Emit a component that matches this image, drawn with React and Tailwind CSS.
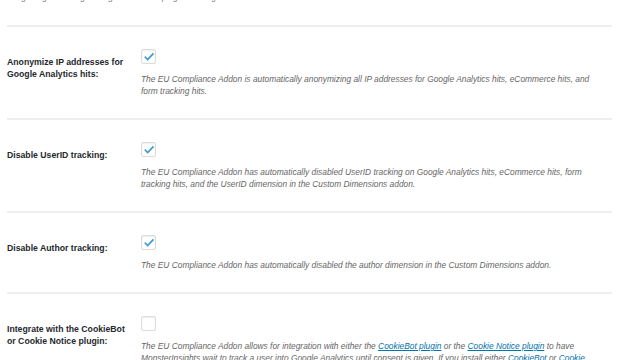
// Ajustes de privacidad - filas de cumplimiento UE
const Check = ({ checked }) => (
  <span className="flex items-center justify-center w-[15px] h-[15px] border border-[#dcdcdc] rounded-[2px] bg-white shadow-[inset_0_1px_2px_rgba(0,0,0,0.07)]">
    {checked && (
      <svg viewBox="0 0 20 20" className="w-[12px] h-[12px]">
        <path d="M4 10.5l3.8 3.8L16.5 5" fill="none" stroke="#3d9bd1" strokeWidth="2.8" strokeLinecap="square" />
      </svg>
    )}
  </span>
);

const Row = ({ label, checked, children }) => (
  <div className="flex border-t-2 border-[#eeeeee] pt-[22px] pb-[21px]">
    <div className="w-[134px] shrink-0 pt-[7px] pr-2 text-[8.7px] leading-[12px] font-bold text-[#23282d]">
      {label}
    </div>
    <div className="flex-1 pr-2">
      <Check checked={checked} />
      <p className="mt-[9px] text-[8.4px] leading-[12px] italic text-[#666666] max-w-[460px]">
        {children}
      </p>
    </div>
  </div>
);

const Link = ({ children }) => (
  <a href="#" className="text-[#0073aa] underline">{children}</a>
);

export default function App() {
  return (
    <div className="w-[620px] h-[360px] overflow-hidden bg-white font-['Liberation_Sans',Arial,sans-serif]">
      <div className="mx-[7px] w-[605px]">
        <p className="-mt-[9px] pb-[22px] text-[8.4px] leading-[12px] text-[#777777]">
          Integrating with a tag manager or custom plugin tracking will be disabled.
        </p>
        <Row label={<>Anonymize IP addresses for<br />Google Analytics hits:</>} checked>
          The EU Compliance Addon is automatically anonymizing all IP addresses for Google Analytics hits, eCommerce hits, and form tracking hits.
        </Row>
        <Row label="Disable UserID tracking:" checked>
          The EU Compliance Addon has automatically disabled UserID tracking on Google Analytics hits, eCommerce hits, form tracking hits, and the UserID dimension in the Custom Dimensions addon.
        </Row>
        <Row label="Disable Author tracking:" checked>
          The EU Compliance Addon has automatically disabled the author dimension in the Custom Dimensions addon.
        </Row>
        <Row label={<>Integrate with the CookieBot<br />or Cookie Notice plugin:</>}>
          The EU Compliance Addon allows for integration with either the <Link>CookieBot plugin</Link> or the <Link>Cookie Notice plugin</Link> to have MonsterInsights wait to track a user into Google Analytics until consent is given. If you install either <Link>CookieBot</Link> or <Link>Cookie Notice</Link> and enable this option, tracking will wait for consent.
        </Row>
      </div>
    </div>
  );
}
